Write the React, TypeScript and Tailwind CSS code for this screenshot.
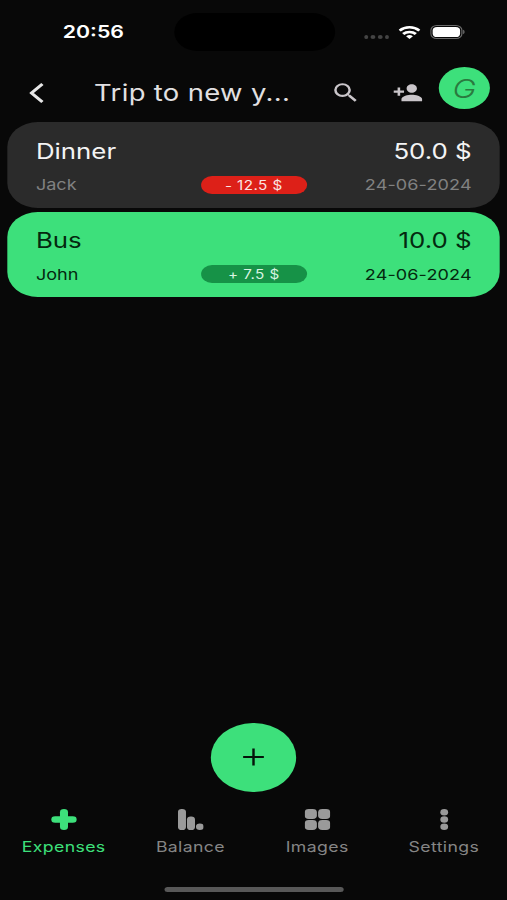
import clsx from 'clsx'
import type { ReactNode } from 'react'
import { MdPersonAddAlt1, MdSearch } from 'react-icons/md'

type Expense = {
    title: string
    payer: string
    amount: string
    share: string
    date: string
    owed: boolean
}

const expenses: Expense[] = [
    { title: 'Dinner', payer: 'Jack', amount: '50.0 $', share: '- 12.5 $', date: '24-06-2024', owed: false },
    { title: 'Bus', payer: 'John', amount: '10.0 $', share: '+ 7.5 $', date: '24-06-2024', owed: true },
]

function StatusBar() {
    return (
        <div className="flex h-[51px] items-start pt-[13px]">
            <p className="w-[143px] pl-[51.5px] text-[17.5px] leading-[38px] font-semibold text-white">20:56</p>
            <div className="h-[38px] w-[132px] rounded-full bg-black" />
            <div className="flex h-[38px] items-center pl-[23.5px]">
                <div className="mt-[9px] flex gap-[2.2px]">
                    {[0, 1, 2, 3].map((dot) => (
                        <span key={dot} className="h-[4px] w-[3.6px] rounded-full bg-[#444444]" />
                    ))}
                </div>
                <svg viewBox="0 0 18 13" className="ml-[7.5px] h-[13px] w-[18px]" fill="none" stroke="#fff" strokeWidth="2.5">
                    <path d="M0.9 4.6A11.6 11.6 0 0 1 17.1 4.6" />
                    <path d="M3.8 8A7.5 7.5 0 0 1 14.2 8" />
                    <path d="M9 13L6.2 10.3A4 4 0 0 1 11.8 10.3Z" fill="#fff" stroke="none" />
                </svg>
                <svg viewBox="0 0 29 14" className="ml-[8px] h-[14px] w-[29px]">
                    <rect x="0.5" y="0.5" width="25.5" height="13" rx="4.8" fill="none" stroke="#6b6b6b" />
                    <rect x="2" y="2" width="22.5" height="10" rx="3.6" fill="#fff" />
                    <path d="M27 4.8C28.6 5.4 28.6 8.6 27 9.2Z" fill="#6b6b6b" />
                </svg>
            </div>
        </div>
    )
}

function Header() {
    return (
        <div className="flex h-[71px] items-start text-[#c9c5c9]">
            <svg viewBox="0 0 12 20" className="mt-[32px] ml-[24px] h-[20px] w-[12px]" fill="none" stroke="#e6e6e6" strokeWidth="2.7">
                <path d="M10.8 1L1.8 10L10.8 19" />
            </svg>
            <p className="mt-[27px] ml-[41.2px] w-[194.3px] text-[22.5px] leading-[30px] tracking-[0.28px] whitespace-nowrap text-[#e2e0e2]">
                Trip to new y...
            </p>
            <MdSearch className="mt-[29px] size-[25.4px] shrink-0" />
            <MdPersonAddAlt1 className="mt-[29px] ml-[25px] size-[25.4px] shrink-0 -scale-x-100" />
            <div className="mt-[16px] ml-[12.5px] flex size-[42.3px] shrink-0 items-center justify-center rounded-full bg-[#3de07b] text-[26px] font-light text-[#2a7a3f] italic">
                G
            </div>
        </div>
    )
}

function ExpenseCard({ expense }: { expense: Expense }) {
    return (
        <div
            className={clsx(
                'flex h-[85.5px] flex-col rounded-[25px] pr-[23px] pl-[23.5px]',
                expense.owed ? 'bg-[#3de07b] text-[#04290f]' : 'bg-[#2b2b2b] text-[#f4f4f4]',
            )}
        >
            <div className="mt-[13.5px] flex justify-between text-[21.2px] leading-[30px]">
                <p>{expense.title}</p>
                <p>{expense.amount}</p>
            </div>
            <div
                className={clsx(
                    'mt-[10px] grid grid-cols-[1fr_87.5px_1fr] items-start text-[14.8px] leading-[18px]',
                    !expense.owed && 'text-[#818181]',
                )}
            >
                <p className="pt-[0.5px]">{expense.payer}</p>
                <p
                    className={clsx(
                        'rounded-full pt-px text-center text-[12.5px] leading-[17px] tracking-[0.35px]',
                        expense.owed ? 'bg-[#169247] text-[#d9f5e2]' : 'bg-[#dd2018] text-[#fbe6e4]',
                    )}
                >
                    {expense.share}
                </p>
                <p className="pt-[0.5px] text-right tracking-[0.1px]">{expense.date}</p>
            </div>
        </div>
    )
}

function NavItem({ label, active, children }: { label: string; active?: boolean; children: ReactNode }) {
    return (
        <div className={clsx('flex flex-1 flex-col items-center gap-[7px]', active ? 'text-[#3de07b]' : 'text-[#858585]')}>
            <svg viewBox="0 0 21 21" className={clsx('size-[21px]', !active && 'text-[#9a9a9a]')} fill="currentColor">
                {children}
            </svg>
            <p className="pl-[0.5px] text-[14.5px] leading-[20px] tracking-[0.3px]">{label}</p>
        </div>
    )
}

function BottomNav() {
    return (
        <div className="flex">
            <NavItem label="Expenses" active>
                <rect x="7.2" y="0" width="6.6" height="21" rx="3.3" />
                <rect x="0" y="7.2" width="21" height="6.6" rx="3.3" />
            </NavItem>
            <NavItem label="Balance">
                <rect x="0" y="0" width="6.6" height="21" rx="3.1" />
                <rect x="7.4" y="7.4" width="6.6" height="13.6" rx="3.1" />
                <circle cx="18" cy="17.8" r="3.2" />
            </NavItem>
            <NavItem label="Images">
                <rect x="0" y="0" width="10" height="10" rx="3.4" />
                <rect x="11" y="0" width="10" height="10" rx="3.4" />
                <rect x="0" y="11" width="10" height="10" rx="3.4" />
                <rect x="11" y="11" width="10" height="10" rx="3.4" />
            </NavItem>
            <NavItem label="Settings">
                <circle cx="10.5" cy="3.2" r="3.2" />
                <circle cx="10.5" cy="10.5" r="3.2" />
                <circle cx="10.5" cy="17.8" r="3.2" />
            </NavItem>
        </div>
    )
}

export default function App() {
    return (
        <div className="h-[900px] w-[507px] overflow-hidden bg-[#080808]">
            {/* a 416px wide phone screen, stretched to the full width of the page */}
            <div className="flex h-[900px] w-[416px] origin-top-left scale-x-[1.21875] flex-col font-['Inter','Liberation_Sans',sans-serif]">
                <StatusBar />
                <Header />
                <div className="flex flex-1 flex-col gap-[4px] px-[6px]">
                    {expenses.map((expense) => (
                        <ExpenseCard key={expense.title} expense={expense} />
                    ))}
                </div>
                <div className="mb-[17px] flex size-[69.5px] shrink-0 items-center justify-center self-center rounded-full bg-[#3de07b]">
                    <svg viewBox="0 0 18 18" className="size-[18px]" stroke="#05140a" strokeWidth="2">
                        <path d="M9 0.5V17.5M0.5 9H17.5" />
                    </svg>
                </div>
                <BottomNav />
                <div className="mt-[29.5px] mb-[8.5px] h-[5px] w-[147px] shrink-0 self-center rounded-full bg-[#585858]" />
            </div>
        </div>
    )
}
